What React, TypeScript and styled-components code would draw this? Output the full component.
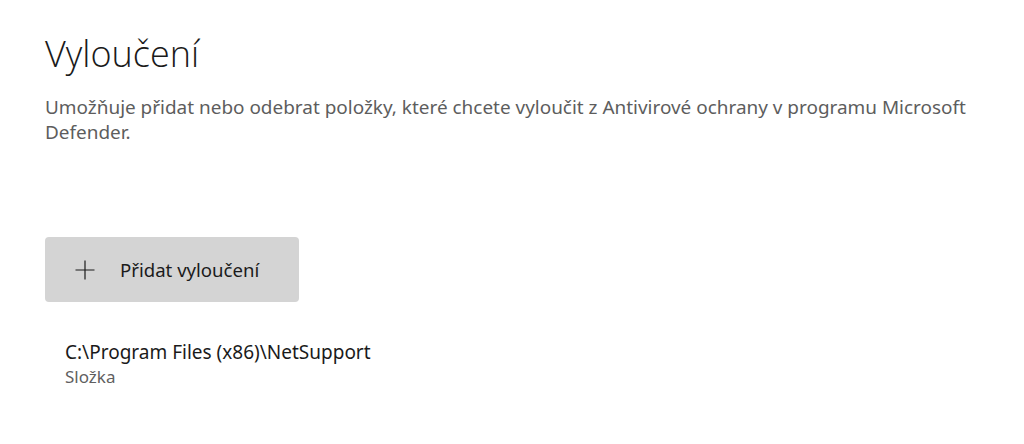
import styled, { createGlobalStyle } from "styled-components";

const GlobalStyle = createGlobalStyle`
  body {
    margin: 0;
    background: #ffffff;
    font-family: "Noto Sans", "Open Sans", "Liberation Sans", sans-serif;
    color: #1a1a1a;
  }
`;

const Page = styled.div`
  padding: 28px 45px 0;
  width: 1024px;
  height: 444px;
  box-sizing: border-box;
`;

const Title = styled.h1`
  margin: 0;
  font-family: "Open Sans", "Noto Sans", sans-serif;
  font-size: 36px;
  font-weight: 300;
  line-height: 52px;
  color: #1a1a1a;
`;

const Description = styled.p`
  margin: 15px 0 0;
  font-size: 18.95px;
  line-height: 25px;
  color: #5d5d5d;
`;

const AddButton = styled.button`
  margin-top: 92px;
  width: 254px;
  height: 65px;
  display: flex;
  align-items: center;
  gap: 25px;
  padding: 0 0 0 30px;
  border: none;
  border-radius: 4px;
  background: #d4d4d4;
  font-family: inherit;
  font-size: 18.6px;
  color: #1b1b1b;
  cursor: pointer;
`;

const PlusIcon = styled.svg`
  width: 20px;
  height: 20px;
  flex-shrink: 0;
`;

const ExclusionItem = styled.div`
  margin-top: 38px;
  padding-left: 20px;
  display: flex;
  flex-direction: column;
`;

const ItemPath = styled.span`
  font-size: 19px;
  line-height: 25px;
  color: #1a1a1a;
`;

const ItemType = styled.span`
  font-size: 17px;
  line-height: 23px;
  color: #5f5f5f;
`;

export default function App() {
  return (
    <>
      <GlobalStyle />
      <Page>
        <Title>Vyloučení</Title>
        <Description>
          Umožňuje přidat nebo odebrat položky, které chcete vyloučit z
          Antivirové ochrany v programu Microsoft Defender.
        </Description>
        <AddButton>
          <PlusIcon viewBox="0 0 20 20">
            <path d="M10 0.5v19M0.5 10h19" stroke="#1b1b1b" strokeWidth="1.2" fill="none" />
          </PlusIcon>
          Přidat vyloučení
        </AddButton>
        <ExclusionItem>
          <ItemPath>C:\Program Files (x86)\NetSupport</ItemPath>
          <ItemType>Složka</ItemType>
        </ExclusionItem>
      </Page>
    </>
  );
}
